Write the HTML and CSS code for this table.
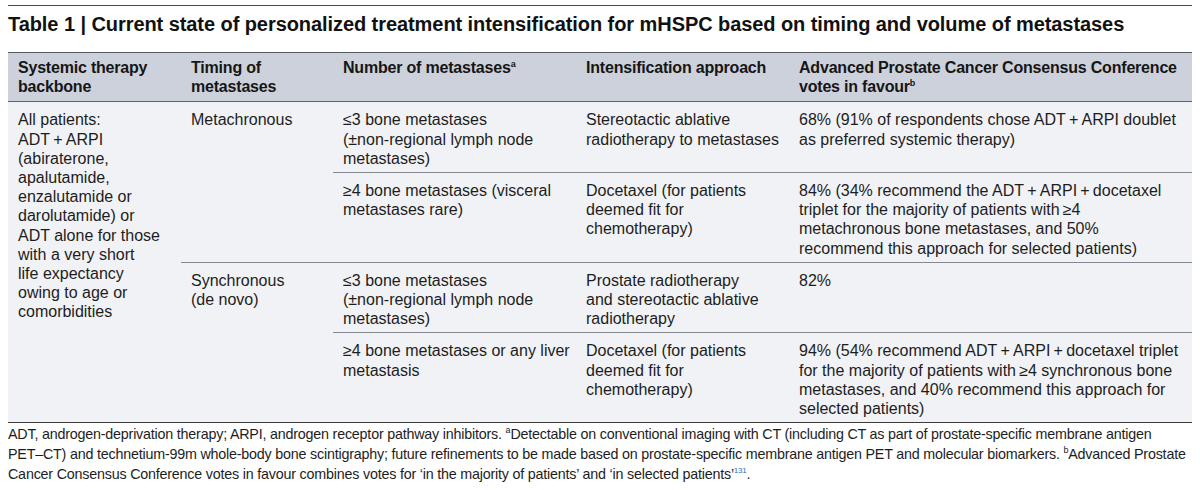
FILE: index.html
```html
<!DOCTYPE html>
<html lang="en">
<head>
<meta charset="utf-8">
<title>Table 1</title>
<link rel="stylesheet" href="styles.css">
</head>
<body>
<div class="page">
  <h1 class="title">Table 1 | Current state of personalized treatment intensification for mHSPC based on timing and volume of metastases</h1>
  <table class="tbl">
    <colgroup>
      <col class="c1"><col class="c2"><col class="c3"><col class="c4"><col class="c5">
    </colgroup>
    <thead>
      <tr>
        <th>Systemic therapy<br>backbone</th>
        <th>Timing of<br>metastases</th>
        <th>Number of metastases<sup class="fn">a</sup></th>
        <th>Intensification approach</th>
        <th>Advanced Prostate Cancer Consensus Conference<br>votes in favour<sup class="fn">b</sup></th>
      </tr>
    </thead>
    <tbody>
      <tr>
        <td rowspan="4" class="last">All patients:<br>ADT&#8201;+&#8201;ARPI<br>(abiraterone,<br>apalutamide,<br>enzalutamide or<br>darolutamide) or<br>ADT alone for those<br>with a very short<br>life expectancy<br>owing to age or<br>comorbidities</td>
        <td rowspan="2" class="sep">Metachronous</td>
        <td class="sep">≤3 bone metastases<br>(±non-regional lymph node<br>metastases)</td>
        <td class="sep">Stereotactic ablative<br>radiotherapy to metastases</td>
        <td class="sep">68% (91% of respondents chose ADT&#8201;+&#8201;ARPI doublet<br>as preferred systemic therapy)</td>
      </tr>
      <tr>
        <td class="sep">≥4 bone metastases (visceral<br>metastases rare)</td>
        <td class="sep">Docetaxel (for patients<br>deemed fit for<br>chemotherapy)</td>
        <td class="sep">84% (34% recommend the ADT&#8201;+&#8201;ARPI&#8201;+&#8201;docetaxel<br>triplet for the majority of patients with&#8201;≥4<br>metachronous bone metastases, and 50%<br>recommend this approach for selected patients)</td>
      </tr>
      <tr>
        <td rowspan="2" class="last">Synchronous<br>(de novo)</td>
        <td class="sep">≤3 bone metastases<br>(±non-regional lymph node<br>metastases)</td>
        <td class="sep">Prostate radiotherapy<br>and stereotactic ablative<br>radiotherapy</td>
        <td class="sep">82%</td>
      </tr>
      <tr>
        <td class="last">≥4 bone metastases or any liver<br>metastasis</td>
        <td class="last">Docetaxel (for patients<br>deemed fit for<br>chemotherapy)</td>
        <td class="last">94% (54% recommend ADT&#8201;+&#8201;ARPI&#8201;+&#8201;docetaxel triplet<br>for the majority of patients with&#8201;≥4 synchronous bone<br>metastases, and 40% recommend this approach for<br>selected patients)</td>
      </tr>
    </tbody>
  </table>
  <p class="notes">ADT, androgen-deprivation therapy; ARPI, androgen receptor pathway inhibitors. <sup class="fn">a</sup>Detectable on conventional imaging with CT (including CT as part of prostate-specific membrane antigen<br>PET–CT) and technetium-99m whole-body bone scintigraphy; future refinements to be made based on prostate-specific membrane antigen PET and molecular biomarkers. <sup class="fn">b</sup>Advanced Prostate<br>Cancer Consensus Conference votes in favour combines votes for ‘in the majority of patients’ and ‘in selected patients’<sup class="ref">131</sup>.</p>
</div>
</body>
</html>
```

FILE: styles.css
```css
body {
  margin: 0;
  background: #ffffff;
  color: #1b1b1b;
  font-family: "Liberation Sans", Arial, sans-serif;
}

.page {
  padding: 5px 8px 0;
}

.title {
  margin: 0 0 16px;
  padding-top: 6px;
  border-top: 1px solid #4a4a4a;
  font-size: 20px;
  line-height: 24px;
  font-weight: 700;
  letter-spacing: -0.07px;
  white-space: nowrap;
  color: #111;
}

.tbl {
  width: 1184px;
  border-collapse: collapse;
  table-layout: fixed;
  font-size: 16px;
  line-height: 19.2px;
}

.c1 { width: 173px; }
.c2 { width: 152px; }
.c3 { width: 243px; }
.c4 { width: 213px; }
.c5 { width: 403px; }

.tbl th {
  background: #cdd1db;
  border-top: 1px solid #555a62;
  border-bottom: 1px solid #5d6169;
  padding: 5px 10px 5px;
  text-align: left;
  vertical-align: top;
  font-weight: 700;
  white-space: nowrap;
  letter-spacing: -0.2px;
  color: #161616;
}

.tbl td {
  background: #f1f2f5;
  padding: 8px 10px 4px;
  vertical-align: top;
  white-space: nowrap;
  color: #1d1d1d;
}

.tbl td.sep {
  border-bottom: 1px solid #84878d;
}

.tbl td.last {
  border-bottom: 1px solid #3c3c3c;
}

.fn {
  font-size: 9px;
  line-height: 0;
  vertical-align: 6px;
}

.ref {
  font-size: 8px;
  line-height: 0;
  vertical-align: 6px;
  color: #2a73b8;
}

.notes {
  margin: 1px 0 0;
  font-size: 14.3px;
  line-height: 20px;
  white-space: nowrap;
  letter-spacing: -0.2px;
  color: #1d1d1d;
}
```
